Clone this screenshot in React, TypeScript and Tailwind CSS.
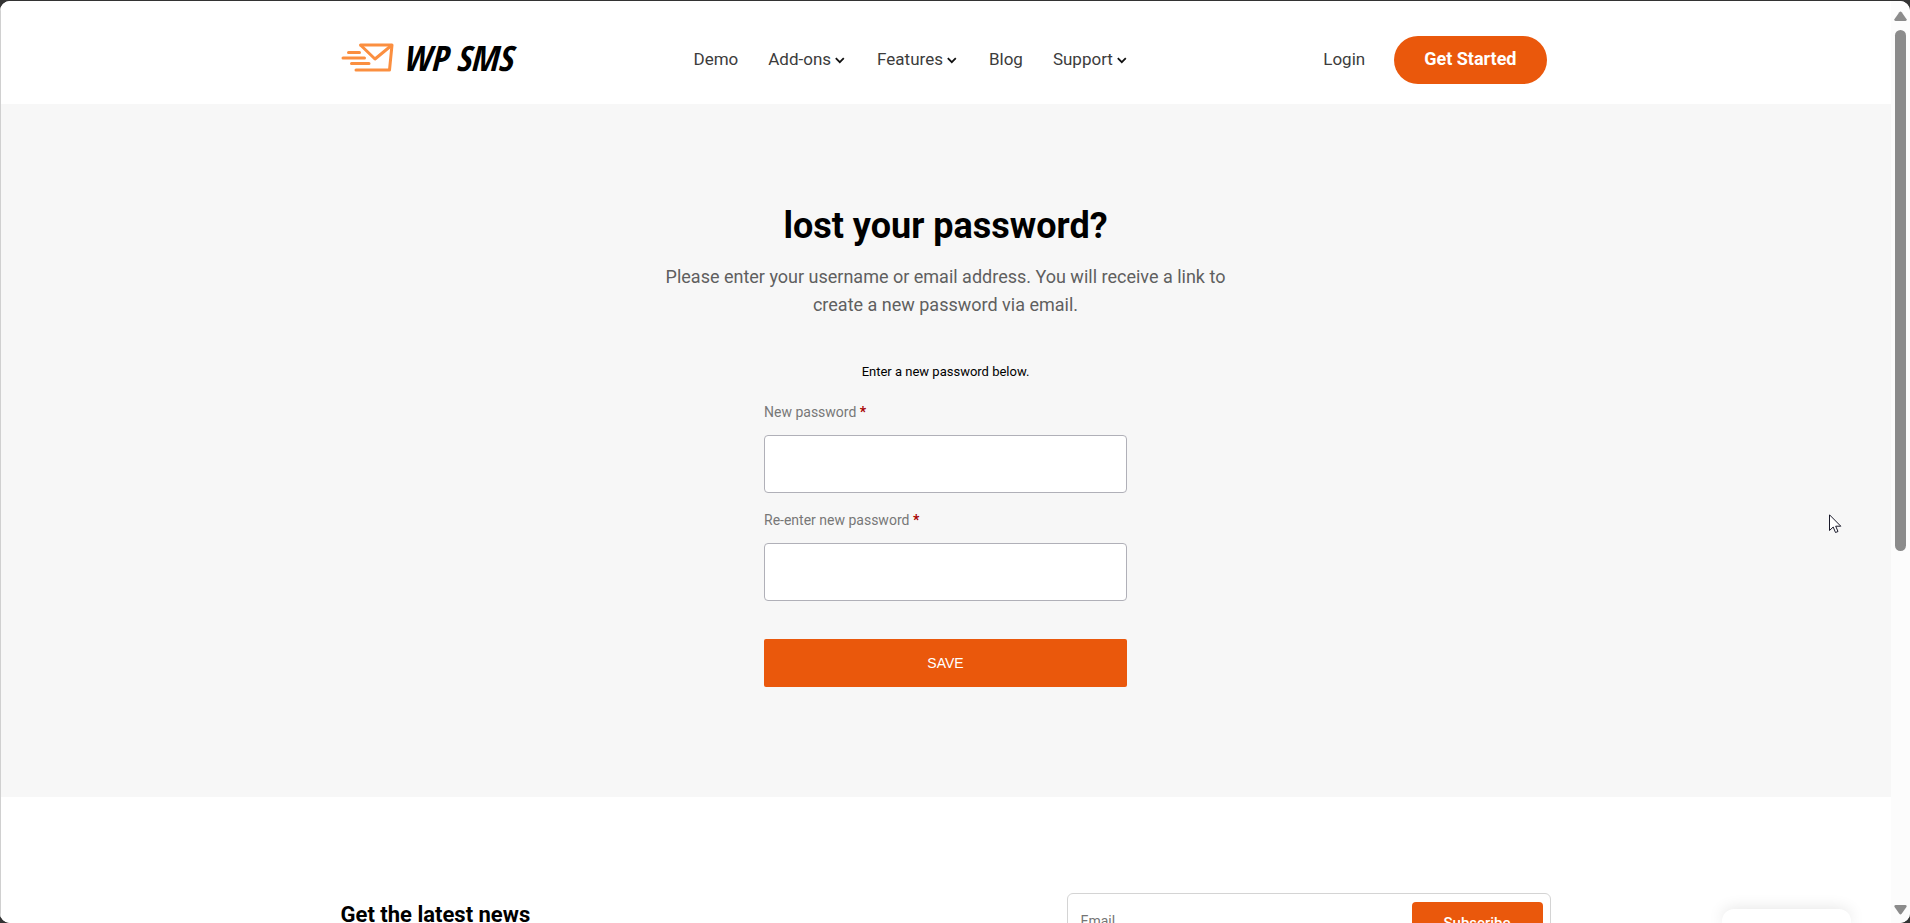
import { useState } from 'react'
import type { FormEvent } from 'react'

const NAV_ITEMS = [
  { label: 'Demo', menu: false },
  { label: 'Add-ons', menu: true },
  { label: 'Features', menu: true },
  { label: 'Blog', menu: false },
  { label: 'Support', menu: true },
]

const FIELDS = [
  { id: 'password_1', label: 'New password' },
  { id: 'password_2', label: 'Re-enter new password' },
]

function Logo() {
  return (
    <a href="#" className="flex items-center gap-2 pb-1">
      <svg width="54" height="30" viewBox="0 0 54 30" fill="none" stroke="#fb8f40" strokeWidth="3" className="shrink-0">
        <path d="M19.500 2H51L48.500 27H15" strokeLinecap="round" strokeLinejoin="round" />
        <path d="M19.500 2L34 16L51 2" strokeLinejoin="round" />
        <path d="M7.500 9.500H18.500M2 15H23.500M10.500 20.500H28" strokeLinecap="round" />
      </svg>
      <span className="font-['Open_Sans_Condensed','Liberation_Sans_Narrow','Open_Sans',sans-serif] text-[35px] leading-10 font-bold whitespace-nowrap text-black italic">
        WP SMS
      </span>
    </a>
  )
}

function Chevron() {
  return (
    <svg width="12" height="7" viewBox="0 0 12 7" fill="none" stroke="#111" strokeWidth="1.8" className="mt-[3px]">
      <path d="M.8 1.200L4.800 5.200L8.800 1.200" />
    </svg>
  )
}

function Header() {
  return (
    <header className="bg-white">
      <div className="mx-auto flex h-[103px] max-w-[1210px] items-center pt-[14px]">
        <div className="w-[353px]">
          <Logo />
        </div>
        <nav className="flex items-center gap-[30px] pb-0.5 text-[17px] leading-6 text-[#3c3c3c]">
          {NAV_ITEMS.map(item => (
            <a key={item.label} href="#" className="flex items-center gap-1">
              {item.label}
              {item.menu && <Chevron />}
            </a>
          ))}
        </nav>
        <div className="ml-auto flex items-center gap-[29px] pr-1">
          <a href="#" className="pb-0.5 text-[17px] leading-6 text-[#3c3c3c]">Login</a>
          <a href="#" className="rounded-full bg-[#ea580c] px-[30px] pt-[11px] pb-[13px] text-lg leading-6 font-bold text-white">
            Get Started
          </a>
        </div>
      </div>
    </header>
  )
}

function ResetForm() {
  const [values, setValues] = useState<Record<string, string>>({})

  function handleSubmit(e: FormEvent) {
    e.preventDefault()
  }

  return (
    <form onSubmit={handleSubmit} className="mx-auto w-full max-w-[363px]">
      <p className="mb-5 text-center text-[13px] leading-5 text-black">Enter a new password below.</p>
      {FIELDS.map(f => (
        <div key={f.id} className="mb-[17px]">
          <label htmlFor={f.id} className="mb-3 block text-sm leading-[21px] text-[#777]">
            {f.label} <span className="font-bold text-[#a80000]">*</span>
          </label>
          <input
            id={f.id}
            type="password"
            value={values[f.id] ?? ''}
            onChange={e => setValues({ ...values, [f.id]: e.target.value })}
            className="block h-[58px] w-full rounded border border-[#b0b0b8] bg-white px-4"
          />
        </div>
      ))}
      <button
        type="submit"
        className="mt-[38px] block h-12 w-full rounded-xs bg-[#ea580c] font-['Liberation_Sans',Arial,sans-serif] text-sm text-white"
      >
        SAVE
      </button>
    </form>
  )
}

function Newsletter() {
  return (
    <section className="bg-white pt-24">
      <div className="mx-auto flex max-w-[1210px] items-start justify-between">
        <h2 className="pt-1 text-[22px] leading-9 font-bold text-black">Get the latest news</h2>
        <form
          onSubmit={e => e.preventDefault()}
          className="flex w-full max-w-[484px] items-start rounded-md border border-[#d4d4d4] py-2 pr-[7px] pl-2"
        >
          <input
            type="email"
            aria-label="Email"
            placeholder="Email"
            className="h-[38px] min-w-0 flex-1 px-[5px] text-sm outline-none placeholder:text-[#757575]"
          />
          <button type="submit" className="h-[42px] w-[131px] rounded bg-[#ea580c] text-[15px] font-medium text-white">
            Subscribe
          </button>
        </form>
      </div>
    </section>
  )
}

function ScrollBar() {
  return (
    <div className="flex w-[19px] shrink-0 flex-col items-center bg-[#fcfcfc] pt-[10px] pb-2">
      <svg width="13" height="10" viewBox="0 0 13 10" fill="#8b8b8b">
        <path d="M5.300 1.200Q6.500 0 7.700 1.200L12.600 8.300Q13 10 11.500 10H1.500Q0 10 .4 8.300Z" />
      </svg>
      <div className="mt-[9px] mb-1.5 w-[11px] flex-1">
        <div className="h-[60%] rounded-full bg-[#8b8b8b]" />
      </div>
      <svg width="13" height="10" viewBox="0 0 13 10" fill="#8b8b8b">
        <path d="M5.300 8.800Q6.500 10 7.700 8.800L12.600 1.700Q13 0 11.500 0H1.500Q0 0 .4 1.700Z" />
      </svg>
    </div>
  )
}

function Pointer() {
  return (
    <svg
      width="13"
      height="20"
      viewBox="0 0 13 20"
      fill="#fff"
      stroke="#1a1a2a"
      strokeWidth="1"
      className="pointer-events-none absolute top-[513px] right-[68px]"
    >
      <path d="M.5 .8V16.500L4.200 13L6.500 18.500L9 17.500L6.700 12.200H11.800Z" />
    </svg>
  )
}

export default function App() {
  return (
    <div className="h-screen overflow-hidden bg-[#333] pt-px font-[Roboto,sans-serif]">
      <div className="relative flex h-full overflow-hidden rounded-[10px] bg-white">
        <div className="min-w-0 flex-1 overflow-hidden">
          <Header />
          <main className="bg-[#f7f7f7] pt-[98px] pb-[110px]">
            <h1 className="text-center text-4xl leading-[48px] font-bold text-black">lost your password?</h1>
            <p className="mx-auto mt-[13px] mb-[43px] max-w-[580px] text-center text-lg leading-7 text-[#5f5f5f]">
              Please enter your username or email address. You will receive a link to create a new password via email.
            </p>
            <ResetForm />
          </main>
          <Newsletter />
        </div>
        <ScrollBar />

        {/* Window edge */}
        <div className="absolute inset-y-0 left-0 w-px bg-[#d0d0d0]" />
        {/* Chat widget peeking in from the bottom edge */}
        <div className="absolute right-[59px] bottom-0 h-[14px] w-[129px] rounded-t-xl bg-white shadow-[0_0_16px_rgba(0,0,0,0.12)]" />
        <Pointer />
      </div>
    </div>
  )
}
